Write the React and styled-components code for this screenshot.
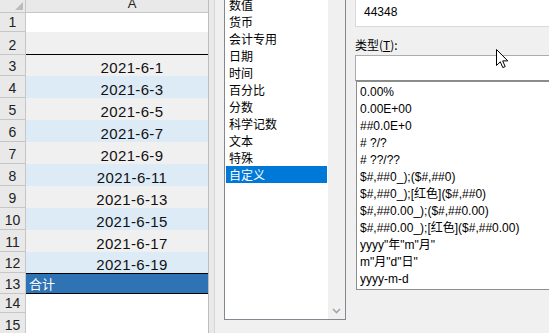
import styled, { createGlobalStyle } from 'styled-components';

const GlobalStyle = createGlobalStyle`
  html, body {
    margin: 0;
    padding: 0;
    width: 549px;
    height: 333px;
    overflow: hidden;
    background: #f0f0f0;
  }
  * {
    box-sizing: border-box;
  }
`;

const Screen = styled.div`
  position: relative;
  width: 549px;
  height: 333px;
  display: flex;
  overflow: hidden;
  font-family: 'Liberation Sans', 'Noto Sans CJK SC', sans-serif;
`;

/* ---------- spreadsheet ---------- */

const Sheet = styled.div`
  width: 208px;
  flex-shrink: 0;
  display: flex;
  flex-direction: column;
  background: #fff;
`;

const Row = styled.div`
  display: flex;
  height: ${(p) => p.$h}px;
  flex-shrink: 0;
`;

const RowHead = styled.div`
  width: 26px;
  flex-shrink: 0;
  background: #e9e9e9;
  border-right: 1px solid #c6c6c6;
  border-bottom: 1px solid #c6c6c6;
  display: flex;
  align-items: flex-end;
  justify-content: center;
  padding-bottom: 1px;
  font-size: 14px;
  line-height: 15px;
  color: #222;
`;

const Corner = styled(RowHead)`
  position: relative;
  &::after {
    content: '';
    position: absolute;
    right: 2px;
    bottom: 2px;
    border-style: solid;
    border-width: 0 0 8px 8px;
    border-color: transparent transparent #bcbcbc transparent;
  }
`;

const ColHead = styled.div`
  flex: 1;
  background: #e9e9e9;
  border-bottom: 1px solid #c6c6c6;
  display: flex;
  align-items: flex-end;
  justify-content: center;
  padding: 0 0 2px 30px;
  font-size: 13px;
  line-height: 13px;
  color: #222;
`;

const fills = {
  white: '#ffffff',
  gray: '#f0f0f0',
  blue: '#ddebf7',
  total: '#2e73b4',
};

const Cell = styled.div`
  flex: 1;
  background: ${(p) => fills[p.$fill]};
  border-top: ${(p) => (p.$top ? '1px solid #000' : 'none')};
  border-bottom: ${(p) => (p.$bottom ? '1px solid #000' : 'none')};
  display: flex;
  align-items: flex-end;
  justify-content: ${(p) => (p.$left ? 'flex-start' : 'center')};
  padding: ${(p) => (p.$left ? '0 0 2px 3px' : '0 0 1px 30px')};
  font-size: 15px;
  line-height: 15px;
  letter-spacing: 0.35px;
  color: #111;
`;

const TotalText = styled.span`
  font-family: 'Noto Sans CJK SC', sans-serif;
  font-size: 13px;
  line-height: 15px;
  letter-spacing: 0;
  color: #fff;
`;

const Edge = styled.div`
  width: 7px;
  flex-shrink: 0;
  background: #e9e9e9;
  border-left: 1px solid #bdbdbd;
  border-right: 1px solid #d6d6d6;
`;

/* ---------- format dialog ---------- */

const Dialog = styled.div`
  flex: 1;
  display: flex;
  align-items: flex-start;
  gap: 9px;
  padding-left: 9px;
  background: #f0f0f0;
`;

const CategoryBox = styled.div`
  width: 122px;
  height: 320px;
  flex-shrink: 0;
  display: flex;
  background: #fff;
  border: 1px solid #828790;
  border-top: none;
  overflow: hidden;
`;

const CategoryList = styled.div`
  flex: 1;
  padding: 0 1px;
  margin-top: -4px;
  display: flex;
  flex-direction: column;
`;

const CategoryItem = styled.div`
  height: 17px;
  line-height: 17px;
  padding-left: 3px;
  font-family: 'Noto Sans CJK SC', sans-serif;
  font-size: 12px;
  color: ${(p) => (p.$active ? '#fff' : '#000')};
  background: ${(p) => (p.$active ? '#0078d7' : 'transparent')};
`;

const ScrollTrack = styled.div`
  width: 17px;
  flex-shrink: 0;
  background: #f0f0f0;
  display: flex;
  align-items: flex-end;
  justify-content: center;
  padding-bottom: 5px;
`;

const RightPane = styled.div`
  width: 200px;
  flex-shrink: 0;
  display: flex;
  flex-direction: column;
`;

const SampleBox = styled.div`
  height: 27px;
  background: #fff;
  border-left: 1px solid #d9d9d9;
  border-bottom: 1px solid #d9d9d9;
  display: flex;
  align-items: center;
  padding: 0 0 2px 8px;
  font-size: 12px;
  color: #000;
`;

const Label = styled.div`
  margin-top: 9px;
  height: 17px;
  line-height: 17px;
  font-family: 'Noto Sans CJK SC', sans-serif;
  font-size: 12px;
  color: #000;
`;

const TypeInput = styled.div`
  margin-top: 2px;
  height: 26px;
  background: #fff;
  border: 1px solid #adadad;
  border-right: none;
  border-bottom: 1px solid #8a8a8a;
`;

const FormatList = styled.div`
  height: 209px;
  background: #fff;
  border: 1px solid #8e8e8e;
  border-right: none;
  margin-left: 1px;
  padding: 2px 0 0 3px;
  display: flex;
  flex-direction: column;
`;

const FormatItem = styled.div`
  height: 17px;
  line-height: 17px;
  font-size: 12px;
  white-space: nowrap;
  color: #000;
`;

const Pointer = styled.svg`
  position: absolute;
  left: 496px;
  top: 49px;
`;

const rows = [
  { n: 1, h: 19, fill: 'white' },
  { n: 2, h: 23, fill: 'gray', bottom: true },
  { n: 3, h: 21, fill: 'gray', text: '2021-6-1' },
  { n: 4, h: 22, fill: 'blue', text: '2021-6-3' },
  { n: 5, h: 22, fill: 'gray', text: '2021-6-5' },
  { n: 6, h: 22, fill: 'blue', text: '2021-6-7' },
  { n: 7, h: 22, fill: 'gray', text: '2021-6-9' },
  { n: 8, h: 22, fill: 'blue', text: '2021-6-11' },
  { n: 9, h: 22, fill: 'gray', text: '2021-6-13' },
  { n: 10, h: 22, fill: 'blue', text: '2021-6-15' },
  { n: 11, h: 22, fill: 'gray', text: '2021-6-17' },
  { n: 12, h: 21, fill: 'blue', text: '2021-6-19' },
  { n: 13, h: 21, fill: 'total', total: true },
  { n: 14, h: 19, fill: 'white' },
  { n: 15, h: 22, fill: 'white' },
];

const categories = [
  '数值',
  '货币',
  '会计专用',
  '日期',
  '时间',
  '百分比',
  '分数',
  '科学记数',
  '文本',
  '特殊',
  '自定义',
];

const formats = [
  '0.00%',
  '0.00E+00',
  '##0.0E+0',
  '# ?/?',
  '# ??/??',
  '$#,##0_);($#,##0)',
  '$#,##0_);[红色]($#,##0)',
  '$#,##0.00_);($#,##0.00)',
  '$#,##0.00_);[红色]($#,##0.00)',
  'yyyy"年"m"月"',
  'm"月"d"日"',
  'yyyy-m-d',
];

function App() {
  return (
    <>
      <GlobalStyle />
      <Screen>
        <Sheet>
          <Row $h={13}>
            <Corner />
            <ColHead>A</ColHead>
          </Row>
          {rows.map((r) => (
            <Row key={r.n} $h={r.h}>
              <RowHead>{r.n}</RowHead>
              <Cell
                $fill={r.fill}
                $bottom={r.bottom || r.total}
                $top={r.total}
                $left={r.total}
              >
                {r.total ? <TotalText>合计</TotalText> : r.text}
              </Cell>
            </Row>
          ))}
        </Sheet>
        <Edge />

        <Dialog>
          <CategoryBox>
            <CategoryList>
              {categories.map((c) => (
                <CategoryItem key={c} $active={c === '自定义'}>
                  {c}
                </CategoryItem>
              ))}
            </CategoryList>
            <ScrollTrack>
              <svg width="9" height="6" viewBox="0 0 9 6">
                <path d="M1 1l3.5 3.5L8 1" fill="none" stroke="#a6a6a6" strokeWidth="1.6" />
              </svg>
            </ScrollTrack>
          </CategoryBox>

          <RightPane>
            <SampleBox>44348</SampleBox>
            <Label>
              类型(<u>T</u>):
            </Label>
            <TypeInput />
            <FormatList>
              {formats.map((f) => (
                <FormatItem key={f}>{f}</FormatItem>
              ))}
            </FormatList>
          </RightPane>
        </Dialog>

        <Pointer width="13" height="20" viewBox="0 0 13 20">
          <path
            d="M0.5 0.5 L0.5 16.5 L4.3 12.8 L6.8 18.6 L9.2 17.6 L6.7 11.9 L11.8 11.9 Z"
            fill="#fff"
            stroke="#000"
            strokeWidth="1"
            strokeLinejoin="miter"
          />
        </Pointer>
      </Screen>
    </>
  );
}

export default App;
